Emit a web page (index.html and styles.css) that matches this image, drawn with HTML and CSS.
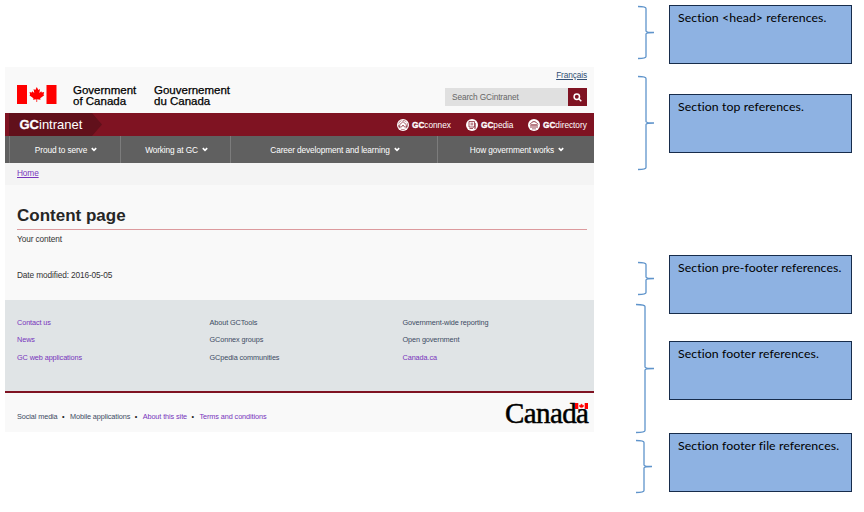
FILE: index.html
```html
<!DOCTYPE html>
<html lang="en">
<head>
<meta charset="utf-8">
<title>Content page - GCintranet</title>
<link rel="stylesheet" href="styles.css">
</head>
<body>
<svg class="defs" width="0" height="0" aria-hidden="true">
  <symbol id="leaf" viewBox="0 0 20 20"><path d="M10 0 12 4 14.3 2.8 13.4 8 16 5.6 16.7 7.3 20 6.8 18.9 10 20 11 14.5 15 15 17 10.5 16.2V20H9.5V16.2L5 17 5.500 15 0 11 1.100 10 0 6.800 3.300 7.300 4 5.600 6.600 8 5.700 2.800 8 4Z"/></symbol>
  <symbol id="chev" viewBox="0 0 6 5"><path d="M.8 1.200 3 3.300 5.200 1.200" fill="none" stroke="#fff" stroke-width="1.700"/></symbol>
</svg>
<main class="page">
  <header class="top">
    <div class="brand">
      <svg class="flag" viewBox="0 0 40 19" fill="#f00"><path d="M0 0H10V19H0ZM29.500 0H39.500V19H29.500Z"/><use href="#leaf" x="12.300" y="1.500" width="15" height="16"/></svg>
      <div class="gov en">Government<br>of Canada</div>
      <div class="gov fr">Gouvernement<br>du Canada</div>
    </div>
    <div class="tools">
      <a class="lang" href="#">Français</a>
      <div class="search"><span class="field">Search GCintranet</span><span class="go"><svg width="9" height="9" viewBox="0 0 9 9" fill="none" stroke="#fff" stroke-width="1.500"><circle cx="3.800" cy="3.800" r="2.700"/><path d="M5.800 5.800 8.300 8.300"/></svg></span></div>
    </div>
  </header>
  <div class="appbar">
    <div class="site"><b>GC</b>intranet</div>
    <div class="apps">
      <a class="app connex"><svg viewBox="0 0 12 12"><circle cx="6" cy="6" r="6" fill="#fff"/><g fill="none" stroke="#7f1322" stroke-width=".7"><circle cx="6" cy="6" r="4.600" stroke-dasharray="4 1.200" stroke-width=".5"/><path d="M4.500 3.800Q6 1.500 7.500 3.800L9 5.500 9.800 8H7.500L6 6 4.500 8H2.200L3 5.500Z"/></g></svg><span><b>GC</b>connex</span></a>
      <a class="app pedia"><svg viewBox="0 0 12 12"><circle cx="6" cy="6" r="6" fill="#fff"/><g fill="none" stroke="#7f1322" stroke-width=".7"><path d="M3 2.500H8.500V8H3ZM4.500 4.200H7.200M4.500 5.800H7.200M3.500 9.500H7M9.300 4V9.500M7.500 8.200 9.500 10"/></g></svg><span><b>GC</b>pedia</span></a>
      <a class="app directory"><svg viewBox="0 0 12 12"><circle cx="6" cy="6" r="6" fill="#fff"/><g fill="none" stroke="#7f1322" stroke-width=".8"><path d="M2 5.300Q6-.3 10 5.300M2.500 5.800H9.500M3 6V9M5 6V10.500M7 6V10.500M9 6V9"/></g></svg><span><b>GC</b>directory</span></a>
    </div>
  </div>
  <nav class="menu">
    <a>Proud to serve<svg class="chev"><use href="#chev"/></svg></a>
    <a>Working at GC<svg class="chev"><use href="#chev"/></svg></a>
    <a>Career development and learning<svg class="chev"><use href="#chev"/></svg></a>
    <a>How government works<svg class="chev"><use href="#chev"/></svg></a>
  </nav>
  <div class="crumbs"><a href="#">Home</a></div>
  <section class="content">
    <h1>Content page</h1>
    <p>Your content</p>
    <p class="modified">Date modified: 2016-05-05</p>
  </section>
  <footer>
    <div class="links">
      <ul><li class="seen">Contact us</li><li class="seen">News</li><li class="seen">GC web applications</li></ul>
      <ul><li>About GCTools</li><li>GConnex groups</li><li>GCpedia communities</li></ul>
      <ul><li>Government-wide reporting</li><li>Open government</li><li class="seen">Canada.ca</li></ul>
    </div>
    <div class="bottom">
      <ul class="terms"><li>Social media</li><li>Mobile applications</li><li class="seen">About this site</li><li class="seen">Terms and conditions</li></ul>
      <div class="wordmark">Canada<svg viewBox="0 0 13 6"><path fill="#f9f9f9" d="M0 0H13V6H0Z"/><g fill="#f00"><path d="M0 0H3.300V6H0ZM9.700 0H13V6H9.700Z"/><use href="#leaf" x="4" y=".3" width="5" height="5.400"/></g></svg></div>
    </div>
  </footer>
</main>
<svg class="braces" viewBox="0 0 20 512" fill="none" stroke="#5f94cb" stroke-width="1.300">
  <path d="M2 6.500Q10 6.500 10 8.500V31Q10 32.500 18 32.500Q10 32.500 10 34V56.500Q10 58.500 2 58.500"/>
  <path d="M2 76.500Q10 76.500 10 78.500V121.500Q10 123 18 123Q10 123 10 124.500V167.500Q10 169.500 2 169.500"/>
  <path d="M2 262.500Q10 262.500 10 264.500V277Q10 278.500 18 278.500Q10 278.500 10 280V292.500Q10 294.500 2 294.500"/>
  <path d="M0 304.500Q9 304.500 9 306.500V367Q9 368.500 18 368.500Q9 368.500 9 370V430.500Q9 432.500 0 432.500"/>
  <path d="M0 440.500Q8 440.500 8 442.500V465Q8 466.500 16 466.500Q8 466.500 8 468V490.500Q8 492.500 0 492.500"/>
</svg>
<aside class="notes">
  <div class="note head">Section &lt;head&gt; references.</div>
  <div class="note upper">Section top references.</div>
  <div class="note pre">Section pre-footer references.</div>
  <div class="note foot">Section footer references.</div>
  <div class="note file">Section footer file references.</div>
</aside>
</body>
</html>
```
FILE: styles.css
```css
* { box-sizing: border-box; }
body { margin: 0; width: 864px; height: 512px; background: #fff; display: flex; align-items: flex-start; overflow: hidden; font: 8.300px/12px "Liberation Sans", Arial, sans-serif; letter-spacing: -.12px; color: #333; }
.defs { position: absolute; }
ul { list-style: none; margin: 0; padding: 0; }
p, h1 { margin: 0; }

.page { margin: 67px 0 0 5px; width: 589px; height: 365px; background: #f9f9f9; }
.top { height: 46px; padding: 0 7px 0 12px; display: flex; justify-content: space-between; }
.brand { display: flex; padding-top: 18px; }
.flag { width: 40px; height: 19px; }
.gov { font-size: 11.500px; line-height: 11px; letter-spacing: 0; color: #000; -webkit-text-stroke: .25px #000; white-space: nowrap; }
.en { margin-left: 16px; width: 81px; }
.tools { display: flex; flex-direction: column; align-items: flex-end; padding-top: 2px; }
.lang { color: #335075; height: 12px; }
.search { display: flex; margin-top: 7px; width: 142px; height: 18px; }
.field { flex: 1; background: #e0e0e0; color: #666; padding-left: 7px; line-height: 19px; }
.go { width: 19px; background: #7f1322; display: flex; align-items: center; justify-content: center; }

.appbar { height: 23px; background: #7f1322; display: flex; justify-content: space-between; color: #fff; }
.site { margin-left: 4px; width: 93px; padding-left: 10.500px; background: #61101b; clip-path: polygon(0 0, 83px 0, 100% 50%, 83px 100%, 0 100%); font-size: 13px; line-height: 23px; letter-spacing: 0; }
.site b, .app b { -webkit-text-stroke: .3px #fff; }
.apps { display: flex; align-items: center; padding-right: 7px; }
.app { display: flex; align-items: center; white-space: nowrap; letter-spacing: -.05px; }
.app svg { width: 12px; height: 12px; margin-right: 3px; }
.connex { width: 69px; }
.pedia { width: 62px; }
.directory { width: 59px; }

.menu { height: 27px; padding-left: 4px; background: #606060; display: grid; grid-template-columns: 111px 110px 207px 1fr; color: #fff; }
.menu a { border-left: 1px solid #7c7c7c; display: flex; align-items: center; justify-content: center; padding-left: 2px; }
.chev { width: 6px; height: 5px; margin-left: 4px; }
.crumbs { height: 22px; background: #f4f4f4; padding: 4px 12px; }
.crumbs a { color: #7834bc; }

.content { height: 115px; padding: 20px 7px 0 12px; }
h1 { font-size: 17px; line-height: 22px; height: 25px; letter-spacing: 0; color: #262626; border-bottom: 1px solid #dc9a9d; }
.content p { margin-top: 3px; }
.content .modified { margin-top: 24px; }

.links { height: 93px; background: #e0e4e6; border-bottom: 2px solid #7f1322; padding: 13.500px 12px 0; display: grid; grid-template-columns: 192.500px 193px 1fr; font-size: 7.300px; line-height: 17.500px; letter-spacing: -.1px; color: #3c4b63; }
.seen { color: #7834bc; }
.bottom { height: 39px; padding: 0 6px 0 12px; display: flex; justify-content: space-between; font-size: 7.300px; letter-spacing: -.1px; color: #3c4b63; }
.terms { display: flex; padding-top: 18px; }
.terms li + li::before { content: "•"; color: #222; margin: 0 5.500px 0 4.500px; }
.wordmark { position: relative; width: 83px; font: 29px/38px "Liberation Serif", serif; letter-spacing: -.6px; color: #000; -webkit-text-stroke: .5px #000; padding-top: 1px; }
.wordmark svg { position: absolute; right: 0; top: 10px; width: 13px; height: 6px; }

.braces { width: 20px; height: 512px; margin-left: 42px; }
.notes { margin-left: 13px; width: 183px; padding-top: 5px; }
.note { height: 59px; border: 1px solid #172c4b; background: #8eb2e2; color: #000; font: 12.300px/16px Lato, sans-serif; padding: 4px 0 0 8px; white-space: nowrap; letter-spacing: .08px; }
.upper { margin-top: 30px; }
.pre { margin-top: 102px; }
.foot { margin-top: 27px; }
.file { margin-top: 33px; }
```
